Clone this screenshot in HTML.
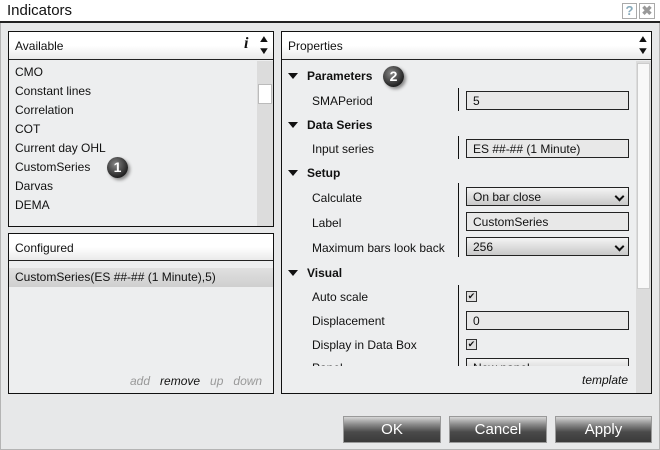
<!DOCTYPE html><html><head><style>
*{box-sizing:border-box;margin:0;padding:0}
body{width:660px;height:450px;overflow:hidden;background:#e7e8e9;font-family:"Liberation Sans",Arial,sans-serif;font-size:12px;color:#111;position:relative}
.a{position:absolute}
#frame{left:0;top:0;width:660px;height:450px;border:1px solid #b4b4b4;border-top:none}
#title{left:0;top:0;width:660px;height:23px;background:#fff;border-bottom:2px solid #222}
.panel{border:1px solid #111;background:#edeeef}
.hdr{left:0;top:0;right:0;height:28px;background:linear-gradient(#fff 0,#fff 50%,#eaeaea 100%);border-bottom:1px solid #222;padding:7px 6px;font-size:12px}
.li{left:6px;font-size:12px}
.btn{top:416px;height:27px;border:1px solid #999;background:linear-gradient(#d6d6d6 0,#8a8a8a 30%,#4a4a4a 60%,#3a3a3a 100%);color:#fff;font-size:15px;text-align:center;line-height:25px}
.lbl{left:30px;font-size:12px}
.sec{left:6px;font-weight:bold;font-size:12px}
.sec:before{content:"";display:inline-block;width:0;height:0;border-left:5px solid transparent;border-right:5px solid transparent;border-top:6px solid #111;margin-right:9px;vertical-align:1px}
.vl{left:176px;width:1px;background:#111}
.in{left:184px;width:163px;height:19px;border:1px solid #222;background:#e8e8e8;padding:2px 6px;font-size:12px}
.dd{background:linear-gradient(#f4f4f4,#c8c8c8)}
.dd:after{content:"";position:absolute;right:5px;top:5px;width:5px;height:5px;border-right:2px solid #111;border-bottom:2px solid #111;transform:rotate(45deg)}
.cb{left:184px;width:11px;height:11px;border:1px solid #333;background:#e0e0e0;font-size:9px;line-height:9px;text-align:center}
.badge{width:21px;height:21px;border-radius:50%;background:radial-gradient(circle at 40% 35%,#888,#222 70%);color:#fff;font-weight:bold;font-size:14px;text-align:center;line-height:21px;box-shadow:2px 2px 3px #888}
.arr{font-size:10px;line-height:12px;transform:scaleX(1.3)}
</style></head><body>
<div class="a" id="frame"></div>
<div class="a" id="title"><span class="a" style="left:7px;top:2px;font-size:15px">Indicators</span>
<div class="a" style="left:622px;top:3px;width:15px;height:16px;border:1px solid #aaa;color:#8ab;font-size:13px;text-align:center;line-height:14px;font-weight:bold">?</div>
<div class="a" style="left:639px;top:3px;width:16px;height:16px;border:1px solid #aaa;color:#999;font-size:13px;text-align:center;line-height:14px;font-weight:bold">✖</div></div>

<div class="a panel" style="left:8px;top:31px;width:266px;height:196px">
<div class="a hdr">Available<span class="a" style="left:235px;top:3px;font-family:'Liberation Serif',serif;font-style:italic;font-weight:bold;font-size:16px">i</span>
<span class="a arr" style="left:250px;top:2px">▲<br>▼</span></div>
<div class="a" style="left:248px;top:29px;width:16px;height:165px;background:#dcdcdc"></div>
<div class="a" style="left:249px;top:52px;width:14px;height:20px;background:#fff;border:1px solid #bbb"></div>
<div class="a li" style="top:33px">CMO</div>
<div class="a li" style="top:52px">Constant lines</div>
<div class="a li" style="top:71px">Correlation</div>
<div class="a li" style="top:90px">COT</div>
<div class="a li" style="top:109px">Current day OHL</div>
<div class="a li" style="top:128px">CustomSeries</div>
<div class="a badge" style="left:98px;top:125px">1</div>
<div class="a li" style="top:147px">Darvas</div>
<div class="a li" style="top:166px">DEMA</div>
</div>

<div class="a panel" style="left:8px;top:233px;width:266px;height:161px">
<div class="a hdr" style="height:27px">Configured</div>
<div class="a" style="left:0;top:34px;width:264px;height:19px;background:linear-gradient(#e0e0e0,#cfcfcf);padding:2px 6px">CustomSeries(ES ##-## (1 Minute),5)</div>
<div class="a" style="left:121px;top:140px;font-style:italic;color:#999">add&nbsp;&nbsp;&nbsp;<span style="color:#111">remove</span>&nbsp;&nbsp;&nbsp;up&nbsp;&nbsp;&nbsp;down</div>
</div>

<div class="a panel" style="left:281px;top:31px;width:371px;height:363px">
<div class="a hdr">Properties<span class="a arr" style="left:356px;top:2px">▲<br>▼</span></div>
<div class="a" style="left:354px;top:29px;width:15px;height:332px;background:#dcdcdc"></div>
<div class="a" style="left:355px;top:31px;width:13px;height:226px;background:#f8f8f8;border:1px solid #ccc"></div>
<div class="a" style="left:0;top:28px;width:354px;height:306px;overflow:hidden">
<div class="a sec" style="top:9px">Parameters</div>
<div class="a badge" style="left:101px;top:6px">2</div>
<div class="a lbl" style="top:34px">SMAPeriod</div>
<div class="a vl" style="top:28px;height:23px"></div>
<div class="a in" style="top:31px">5</div>
<div class="a sec" style="top:58px">Data Series</div>
<div class="a lbl" style="top:82px">Input series</div>
<div class="a vl" style="top:76px;height:23px"></div>
<div class="a in" style="top:79px">ES ##-## (1 Minute)</div>
<div class="a sec" style="top:106px">Setup</div>
<div class="a vl" style="top:123px;height:74px"></div>
<div class="a lbl" style="top:131px">Calculate</div>
<div class="a in dd" style="top:127px">On bar close</div>
<div class="a lbl" style="top:156px">Label</div>
<div class="a in" style="top:152px">CustomSeries</div>
<div class="a lbl" style="top:181px">Maximum bars look back</div>
<div class="a in dd" style="top:177px">256</div>
<div class="a sec" style="top:206px">Visual</div>
<div class="a vl" style="top:225px;height:90px"></div>
<div class="a lbl" style="top:230px">Auto scale</div>
<div class="a cb" style="top:231px">✔</div>
<div class="a lbl" style="top:254px">Displacement</div>
<div class="a in" style="top:251px">0</div>
<div class="a lbl" style="top:278px">Display in Data Box</div>
<div class="a cb" style="top:279px">✔</div>
<div class="a lbl" style="top:301px">Panel</div>
<div class="a in dd" style="top:298px">New panel</div>
</div>
<div class="a" style="left:300px;top:341px;font-style:italic">template</div>
</div>

<div class="a btn" style="left:343px;width:98px">OK</div>
<div class="a btn" style="left:449px;width:98px">Cancel</div>
<div class="a btn" style="left:555px;width:97px">Apply</div>
</body></html>
